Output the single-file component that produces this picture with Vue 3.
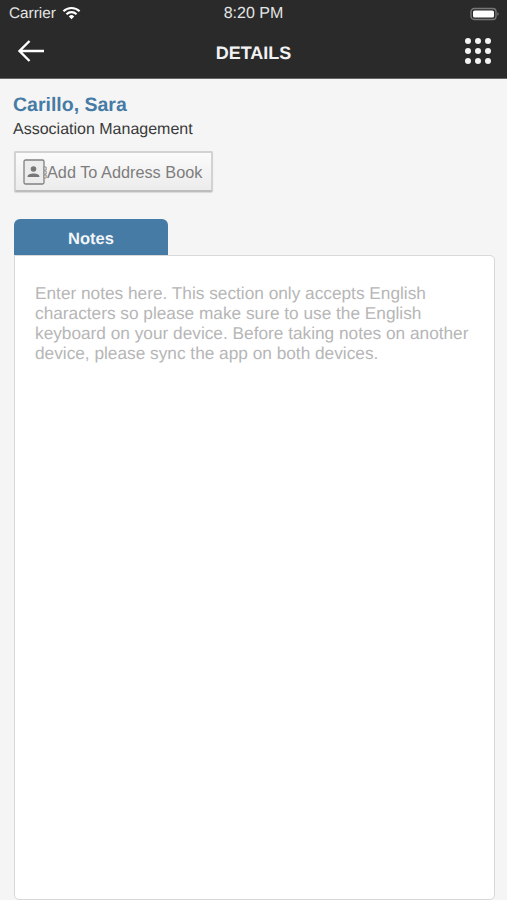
<template>
  <div class="screen">
    <header class="top">
      <div class="status">
        <div class="carrier">
          <span>Carrier</span>
          <svg class="wifi" width="19" height="14" viewBox="0 0 20 14">
            <path d="M1.5 5.2a12 12 0 0 1 17 0" fill="none" stroke="#fff" stroke-width="2.2" />
            <path d="M4.7 8.2a7.6 7.6 0 0 1 10.6 0" fill="none" stroke="#fff" stroke-width="2.2" />
            <path d="M7.2 10.6a4 4 0 0 1 5.6 0L10 13.6z" fill="#fff" />
          </svg>
        </div>
        <span class="time">8:20 PM</span>
        <svg class="battery" width="30" height="14" viewBox="0 0 30 14">
          <rect x="1" y="1.5" width="25" height="11" rx="3.2" fill="none" stroke="#777" stroke-width="1.4" />
          <rect x="3" y="3.4" width="21" height="7.2" rx="1.6" fill="#fff" />
          <path d="M27.4 5v4l1.6-2z" fill="#777" />
        </svg>
      </div>
      <div class="nav">
        <svg class="back" width="28" height="24" viewBox="0 0 28 24">
          <path d="M27 12H3M12.5 2 2.5 12l10 10" fill="none" stroke="#fff" stroke-width="2.4" />
        </svg>
        <h1>DETAILS</h1>
        <div class="dots">
          <i v-for="n in 9" :key="n"></i>
        </div>
      </div>
    </header>

    <main class="body">
      <div class="name">Carillo, Sara</div>
      <div class="dept">Association Management</div>
      <button class="add">
        <svg width="24" height="26" viewBox="0 0 24 26">
          <rect x="1" y="1" width="20" height="24" rx="1.5" fill="#ececec" stroke="#808080" stroke-width="1.3" />
          <circle cx="10.5" cy="10" r="2.8" fill="#777" />
          <path d="M4.5 18c0-2.8 2.8-3.6 6-3.6s6 .8 6 3.6z" fill="#777" />
          <path d="M21 8h2.2v3H21zM21 12h2.2v3H21zM21 16h2.2v3H21z" fill="#ececec" stroke="#808080" stroke-width=".8" />
        </svg>
        <span>Add To Address Book</span>
      </button>

      <div class="tab">Notes</div>
      <section class="notes">
        <p>Enter notes here. This section only accepts English characters so please make sure to use the English keyboard on your device. Before taking notes on another device, please sync the app on both devices.</p>
      </section>
    </main>
  </div>
</template>

<script setup>
</script>

<style>
html, body {
  margin: 0;
  background: #f5f5f5;
}
</style>

<style scoped>
.screen {
  width: 507px;
  height: 900px;
  display: flex;
  flex-direction: column;
  overflow: hidden;
  font-family: "Liberation Sans", Arial, sans-serif;
  text-rendering: geometricPrecision;
  background: #f5f5f5;
}

.top {
  height: 79px;
  flex: none;
  box-sizing: border-box;
  background: #2a2a2a;
  border-bottom: 1px solid #666;
  color: #fff;
}

.status {
  height: 28px;
  display: flex;
  align-items: center;
  justify-content: space-between;
  padding: 0 7px 0 9px;
  box-sizing: border-box;
  position: relative;
  font-size: 15.3px;
  color: #e4e4e4;
}

.carrier {
  display: flex;
  align-items: center;
  gap: 6px;
}

.wifi {
  margin-top: -3px;
}

.time {
  position: absolute;
  left: 0;
  right: 0;
  text-align: center;
  font-size: 16px;
}

.nav {
  height: 50px;
  display: flex;
  align-items: center;
  justify-content: space-between;
  padding: 0 17px 4px 17px;
  box-sizing: border-box;
  position: relative;
}

.nav h1 {
  position: absolute;
  left: 0;
  right: 0;
  margin: 4px 0 0;
  text-align: center;
  font-size: 18px;
  font-weight: 700;
  color: #f2f2f2;
}

.dots {
  display: grid;
  grid-template-columns: repeat(3, 6px);
  gap: 4px;
  margin-right: -1px;
}

.dots i {
  width: 6px;
  height: 6px;
  border-radius: 50%;
  background: #f4f4f4;
}

.body {
  flex: 1;
  min-height: 0;
  display: flex;
  flex-direction: column;
  align-items: flex-start;
  padding: 15px 12px 0 13px;
}

.name {
  font-size: 19.5px;
  line-height: 22px;
  font-weight: 700;
  color: #457ba5;
}

.dept {
  margin-top: 4px;
  font-size: 16px;
  line-height: 20px;
  color: #3a3a3a;
}

.add {
  margin-top: 11px;
  margin-left: 1px;
  width: 199px;
  height: 41px;
  padding: 0 0 0 7px;
  display: flex;
  align-items: center;
  border: 2px solid #d2d2d2;
  border-bottom-color: #bdbdbd;
  border-radius: 2px;
  background: linear-gradient(#fbfbfb, #ececec);
  box-shadow: 0 1px 1px rgba(0, 0, 0, 0.12);
  font: 16.3px "Liberation Sans", Arial, sans-serif;
  color: #7d7d7d;
}

.add svg {
  flex: none;
}

.add span {
  padding-top: 2px;
}

.tab {
  margin-top: 27px;
  margin-left: 1px;
  width: 154px;
  height: 36px;
  flex: none;
  box-sizing: border-box;
  padding-top: 4px;
  display: flex;
  align-items: center;
  justify-content: center;
  border-radius: 6px 6px 0 0;
  background: #457ba5;
  color: #f2f6f9;
  font-size: 16.5px;
  font-weight: 700;
}

.notes {
  flex: 1;
  align-self: stretch;
  margin: 0 0 0 1px;
  background: #fff;
  border: 1.5px solid #d8d8d8;
  border-radius: 0 5px 5px 5px;
  box-sizing: border-box;
  padding: 27px 20px 0 20px;
}

.notes p {
  margin: 0;
  font-size: 17.25px;
  line-height: 20px;
  color: #b6b6b6;
}
</style>
